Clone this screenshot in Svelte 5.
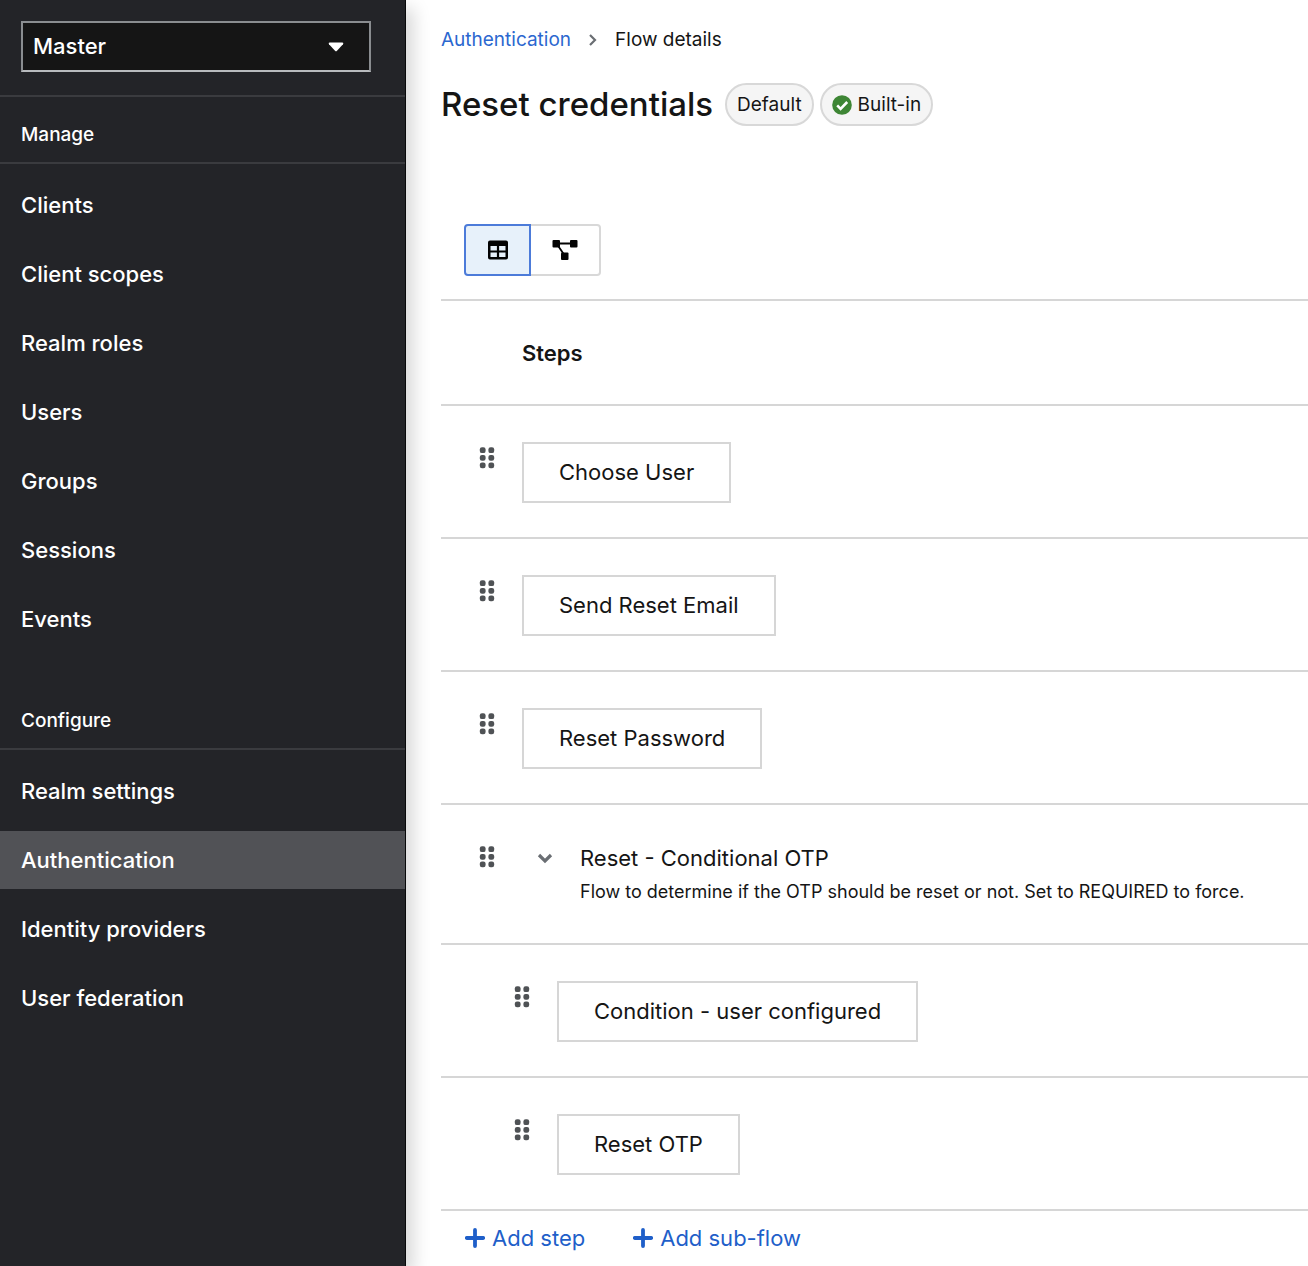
<script>
  const manage = ['Clients', 'Client scopes', 'Realm roles', 'Users', 'Groups', 'Sessions', 'Events'];
  const configure = ['Realm settings', 'Authentication', 'Identity providers', 'User federation'];
  const steps = [
    { name: 'Choose User' },
    { name: 'Send Reset Email' },
    { name: 'Reset Password' },
    {
      name: 'Reset - Conditional OTP',
      description: 'Flow to determine if the OTP should be reset or not. Set to REQUIRED to force.'
    },
    { name: 'Condition - user configured', nested: true },
    { name: 'Reset OTP', nested: true }
  ];
  let current = $state('Authentication');
  let view = $state('table');
  let open = $state(true);
</script>

{#snippet navGroup(title, items)}
  <section class="group">
    <h2>{title}</h2>
    <ul>
      {#each items as item}
        <li>
          <a
            href="#{item.toLowerCase().replace(' ', '-')}"
            class:current={item === current}
            aria-current={item === current ? 'page' : undefined}
            onclick={() => (current = item)}>{item}</a
          >
        </li>
      {/each}
    </ul>
  </section>
{/snippet}

{#snippet plus()}
  <svg class="plus" viewBox="0 0 20 20" aria-hidden="true">
    <path d="M10 2v16M1.800 10h16.400" stroke="currentColor" stroke-width="3.800" stroke-linecap="round" />
  </svg>
{/snippet}

<div class="page">
  <aside>
    <div class="realm">
      <select aria-label="Realm">
        <option>Master</option>
      </select>
      <svg class="caret" viewBox="0 0 16 10" aria-hidden="true">
        <path d="M1.6 0.5h12.8q1.6.3.6 1.7L9 8.800q-1 1-2 0L1 2.200Q0 .8 1.600.5z" fill="#fff" />
      </svg>
    </div>
    <nav aria-label="Main">
      {@render navGroup('Manage', manage)}
      {@render navGroup('Configure', configure)}
    </nav>
  </aside>

  <main>
    <nav class="crumbs" aria-label="Breadcrumb">
      <a href="#authentication">Authentication</a>
      <svg viewBox="0 0 10 14" aria-hidden="true">
        <path d="M2 2l5 5-5 5" fill="none" stroke="#6a6e73" stroke-width="2.2" />
      </svg>
      <span aria-current="page">Flow details</span>
    </nav>

    <header>
      <h1>Reset credentials</h1>
      <span class="badge">Default</span>
      <span class="badge">
        <svg viewBox="0 0 20 20" aria-hidden="true">
          <circle cx="10" cy="10" r="9.800" fill="#3e8635" />
          <path d="M5.200 10.400l3.400 3.400 6.600-6.800" fill="none" stroke="#fff" stroke-width="2.600" />
        </svg>
        Built-in
      </span>
    </header>

    <div class="toggle" role="group" aria-label="View">
      <button aria-label="Table view" aria-pressed={view === 'table'} class:on={view === 'table'} onclick={() => (view = 'table')}>
        <svg class="grid" viewBox="0 0 20 20" aria-hidden="true">
          <path
            fill-rule="evenodd"
            fill="#030303"
            d="M2 0.500h16q2 0 2 2v15q0 2-2 2H2q-2 0-2-2v-15q0-2 2-2zM2.500 6v4.400h6.400V6zM11.100 6v4.400h6.400V6zM2.500 12.600V17h6.400v-4.400zM11.100 12.600V17h6.400v-4.400z"
          />
        </svg>
      </button>
      <button aria-label="Diagram view" aria-pressed={view === 'diagram'} class:on={view === 'diagram'} onclick={() => (view = 'diagram')}>
        <svg class="diagram" viewBox="0 0 26 22" aria-hidden="true">
          <path d="M4 4.500h18M4.500 4.500l8.500 12.500" stroke="#030303" stroke-width="1.800" />
          <g fill="#030303">
            <rect x="0.500" y="1" width="7.500" height="7.500" rx="1" />
            <rect x="18" y="1" width="7.500" height="7.500" rx="1" />
            <rect x="9" y="13.500" width="7.500" height="7.500" rx="1" />
          </g>
        </svg>
      </button>
    </div>

    <table>
      <thead>
        <tr><th scope="col">Steps</th></tr>
      </thead>
      <tbody>
        {#each steps as step}
          {#if open || !step.nested}
            <tr>
              <td>
                <div class="row" class:nested={step.nested}>
                  <button class="drag" aria-label="Drag {step.name}">
                    <svg viewBox="0 0 16 22" aria-hidden="true">
                      <g fill="#4f5255">
                        {#each [0.3, 7.9, 15.5] as y}
                          <rect x="0.800" {y} width="5.800" height="5.800" rx="2.200" />
                          <rect x="9.400" {y} width="5.800" height="5.800" rx="2.200" />
                        {/each}
                      </g>
                    </svg>
                  </button>
                  {#if step.description}
                    <button class="expand" aria-label="Toggle {step.name}" aria-expanded={open} onclick={() => (open = !open)}>
                      <svg viewBox="0 0 16 11" aria-hidden="true">
                        <path d="M2 2l6 6 6-6" fill="none" stroke="#6a6e73" stroke-width="3.200" />
                      </svg>
                    </button>
                    <div class="flow">
                      <div class="name">{step.name}</div>
                      <div class="description">{step.description}</div>
                    </div>
                  {:else}
                    <div class="card">{step.name}</div>
                  {/if}
                </div>
              </td>
            </tr>
          {/if}
        {/each}
      </tbody>
    </table>

    <div class="actions">
      <button>{@render plus()}Add step</button>
      <button>{@render plus()}Add sub-flow</button>
    </div>
  </main>
</div>

<style>
  :global(body) {
    margin: 0;
    background: #fff;
  }
  .page {
    display: flex;
    min-height: 100vh;
    font-family: Inter, 'Liberation Sans', sans-serif;
    font-size: 22px;
    line-height: 30px;
    color: #151515;
  }
  .page :is(button, select) {
    font: inherit;
    cursor: pointer;
  }
  svg {
    display: block;
    flex: none;
  }
  button {
    margin: 0;
    padding: 0;
    border: 0;
    background: none;
  }
  aside {
    flex: none;
    box-sizing: border-box;
    width: 406px;
    background: #232428;
    border-right: 1px solid #08090a;
    box-shadow: 8px 8px 16px rgba(3, 3, 3, 0.15);
    color: #fff;
    font-weight: 500;
  }
  .realm {
    position: relative;
    padding: 21px 34px 23px 21px;
    border-bottom: 2px solid #3a3b3f;
  }
  select {
    display: block;
    box-sizing: border-box;
    width: 100%;
    height: 51px;
    padding: 0 10px 2px;
    appearance: none;
    background: #151515;
    border: 2px solid #8a8d90;
    border-bottom-color: #b8bbbe;
    border-radius: 0;
    color: #fff;
  }
  .caret {
    position: absolute;
    top: 42px;
    right: 61px;
    width: 16px;
    height: 10px;
    pointer-events: none;
  }
  .group {
    margin-bottom: 35px;
  }
  h2 {
    margin: 0;
    padding: 22px 21px 11px;
    border-bottom: 2px solid #3a3b3f;
    font-size: 19px;
    font-weight: 500;
    line-height: 32px;
  }
  ul {
    display: flex;
    flex-direction: column;
    gap: 11px;
    margin: 0;
    padding: 12px 0 0;
    list-style: none;
  }
  li a {
    display: block;
    padding: 14px 21px;
    color: #fff;
    text-decoration: none;
  }
  li a.current {
    background: #515256;
  }
  main {
    flex: 1;
    min-width: 0;
    padding: 25px 0 0 35px;
  }
  .crumbs {
    display: flex;
    align-items: center;
    gap: 17px;
    font-size: 19px;
  }
  .crumbs a {
    color: #2b67cf;
    text-decoration: none;
  }
  .crumbs svg {
    width: 10px;
    height: 14px;
  }
  header {
    display: flex;
    align-items: center;
    gap: 6px;
    margin-top: 28px;
  }
  h1 {
    margin: 0 6px 0 0;
    padding-bottom: 2px;
    font-size: 33px;
    font-weight: 500;
    line-height: 40px;
    white-space: nowrap;
  }
  .badge {
    display: flex;
    align-items: center;
    gap: 6px;
    padding: 5px 10px;
    border: 2px solid #d8d8d8;
    border-radius: 22px;
    background: #f5f5f5;
    font-size: 19px;
    line-height: 29px;
    white-space: nowrap;
  }
  .badge svg {
    width: 20px;
    height: 20px;
  }
  .toggle {
    display: flex;
    margin: 98px 0 23px 23px;
  }
  .toggle button {
    display: flex;
    align-items: center;
    justify-content: center;
    box-sizing: border-box;
    width: 70px;
    height: 52px;
    border: 2px solid #d8d8d8;
    border-left-width: 0;
    border-radius: 0 4px 4px 0;
  }
  .toggle button:first-child {
    width: 67px;
    border-left-width: 2px;
    border-radius: 4px 0 0 4px;
  }
  .toggle .on {
    background: #e7f1fa;
    border-color: #4c7bd9;
  }
  .grid {
    width: 20px;
    height: 20px;
  }
  .diagram {
    width: 26px;
    height: 22px;
  }
  table {
    width: 100%;
    border-collapse: separate;
    border-spacing: 0;
    border-top: 2px solid #d6d6d6;
  }
  th {
    padding: 37px 0 36px 81px;
    border-bottom: 2px solid #d6d6d6;
    font-size: 22px;
    font-weight: 600;
    text-align: left;
  }
  td {
    padding: 36px 0 34px 38px;
    border-bottom: 2px solid #d6d6d6;
  }
  .row {
    display: flex;
    align-items: flex-start;
  }
  .nested {
    padding-left: 35px;
  }
  .drag {
    flex: none;
    margin: 5px 27px 0 0;
  }
  .drag svg {
    width: 16px;
    height: 22px;
  }
  .card {
    padding: 14px 35px 15px;
    border: 2px solid #d6d6d6;
    line-height: 28px;
  }
  .expand {
    padding: 12px 27px 12px 15px;
  }
  .expand svg {
    width: 16px;
    height: 11px;
  }
  .flow {
    min-width: 0;
  }
  .name {
    line-height: 34px;
  }
  .description {
    font-size: 18px;
    line-height: 34px;
  }
  .actions {
    display: flex;
    gap: 48px;
    padding: 12px 24px;
  }
  .actions button {
    display: flex;
    align-items: center;
    gap: 7px;
    color: #1f5fc9;
  }
  .plus {
    width: 20px;
    height: 20px;
  }
</style>
